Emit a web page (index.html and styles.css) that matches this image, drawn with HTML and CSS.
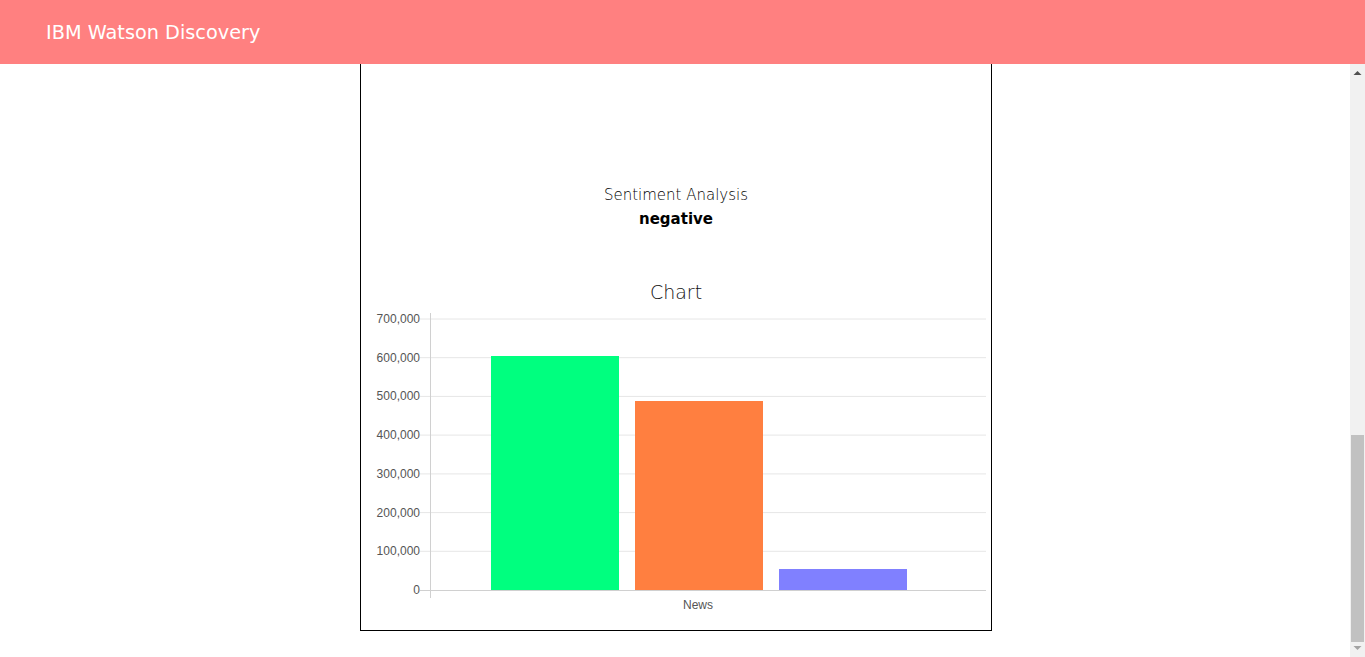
FILE: index.html
```html
<!DOCTYPE html>
<html lang="en">
<head>
<meta charset="utf-8">
<title>IBM Watson Discovery</title>
<link rel="stylesheet" href="styles.css">
</head>
<body>
<header class="topbar">
  <div class="brand">IBM Watson Discovery</div>
</header>
<div class="body-row">
  <main class="viewport">
    <div class="page">
      <section class="card">
        <div class="card-top"></div>
        <div class="sentiment">
          <div class="sentiment-label">Sentiment Analysis</div>
          <div class="sentiment-value">negative</div>
        </div>
        <h2 class="chart-title">Chart</h2>
        <svg class="chart" width="630" height="310" viewBox="0 0 630 310">
          <g class="grid">
            <line x1="59" y1="9" x2="625" y2="9"/>
            <line x1="59" y1="47.7" x2="625" y2="47.7"/>
            <line x1="59" y1="86.4" x2="625" y2="86.4"/>
            <line x1="59" y1="125.1" x2="625" y2="125.1"/>
            <line x1="59" y1="163.9" x2="625" y2="163.9"/>
            <line x1="59" y1="202.6" x2="625" y2="202.6"/>
            <line x1="59" y1="241.3" x2="625" y2="241.3"/>
          </g>
          <line class="axis" x1="69.5" y1="3" x2="69.5" y2="288"/>
          <rect x="130" y="46" width="128" height="234" fill="#00ff7f"/>
          <rect x="274" y="91" width="128" height="189" fill="#ff7f40"/>
          <rect x="418" y="259" width="128" height="21" fill="#8080ff"/>
          <line class="axis" x1="59" y1="280.5" x2="625" y2="280.5"/>
          <g class="ylabels">
            <text x="59" y="13">700,000</text>
            <text x="59" y="51.7">600,000</text>
            <text x="59" y="90.4">500,000</text>
            <text x="59" y="129.1">400,000</text>
            <text x="59" y="167.9">300,000</text>
            <text x="59" y="206.6">200,000</text>
            <text x="59" y="245.3">100,000</text>
            <text x="59" y="284">0</text>
          </g>
          <text class="xlabel" x="337" y="299">News</text>
        </svg>
      </section>
    </div>
  </main>
  <div class="scrollbar">
    <div class="sb-button">
      <svg width="15" height="15" viewBox="0 0 15 15"><polygon points="3.5,11 11.5,11 7.5,7" fill="#505050"/></svg>
    </div>
    <div class="sb-track">
      <div class="sb-thumb"></div>
    </div>
    <div class="sb-button">
      <svg width="15" height="15" viewBox="0 0 15 15"><polygon points="3.5,4 11.5,4 7.5,8" fill="#a3a3a3"/></svg>
    </div>
  </div>
</div>
</body>
</html>
```

FILE: styles.css
```css
html, body {
  margin: 0;
  padding: 0;
  height: 100%;
  overflow: hidden;
  background: #ffffff;
  font-family: "DejaVu Sans", "Liberation Sans", sans-serif;
}

body {
  display: flex;
  flex-direction: column;
}

.topbar {
  height: 64px;
  flex: 0 0 64px;
  background: #ff8080;
  display: flex;
  align-items: center;
  padding-left: 46px;
}

.brand {
  color: #ffffff;
  font-size: 19.3px;
  font-weight: 400;
}

.body-row {
  flex: 1 1 auto;
  min-height: 0;
  display: flex;
}

.viewport {
  flex: 1 1 auto;
  min-width: 0;
  overflow: hidden;
  display: flex;
  flex-direction: column-reverse;
}

.scrollbar {
  flex: 0 0 15px;
  width: 15px;
  background: #f1f1f1;
  display: flex;
  flex-direction: column;
}

.sb-button {
  height: 15px;
  flex: 0 0 15px;
}

.sb-button svg {
  display: block;
}

.sb-track {
  flex: 1 1 auto;
  display: flex;
  flex-direction: column;
  justify-content: flex-end;
}

.sb-thumb {
  height: 207px;
  margin: 0 1px;
  background: #c1c1c1;
}

.page {
  display: flex;
  justify-content: center;
  padding-left: 2px;
  padding-bottom: 26px;
}

.card {
  width: 632px;
  box-sizing: border-box;
  border: 1px solid #000000;
  display: flex;
  flex-direction: column;
  align-items: center;
  padding-bottom: 10px;
}

.card-top {
  height: 400px;
}

.sentiment {
  text-align: center;
  color: #000000;
  margin-top: 3px;
}

.sentiment-label {
  font-size: 15px;
  font-weight: 300;
  line-height: 24px;
}

.sentiment-value {
  font-size: 15px;
  font-weight: 700;
  line-height: 24px;
}

.chart-title {
  margin: 49px 0 6px 0;
  font-size: 19px;
  font-weight: 300;
  line-height: 24px;
  color: #111111;
}

.chart {
  display: block;
  align-self: flex-start;
}

.grid line {
  stroke: #e6e6e6;
  stroke-width: 1;
}

.axis {
  stroke: #d0d0d0;
  stroke-width: 1;
}

.ylabels text {
  font-family: "Liberation Sans", Arial, sans-serif;
  font-size: 12px;
  fill: #555555;
  text-anchor: end;
}

.xlabel {
  font-family: "Liberation Sans", Arial, sans-serif;
  font-size: 12px;
  fill: #555555;
  text-anchor: middle;
}
```
